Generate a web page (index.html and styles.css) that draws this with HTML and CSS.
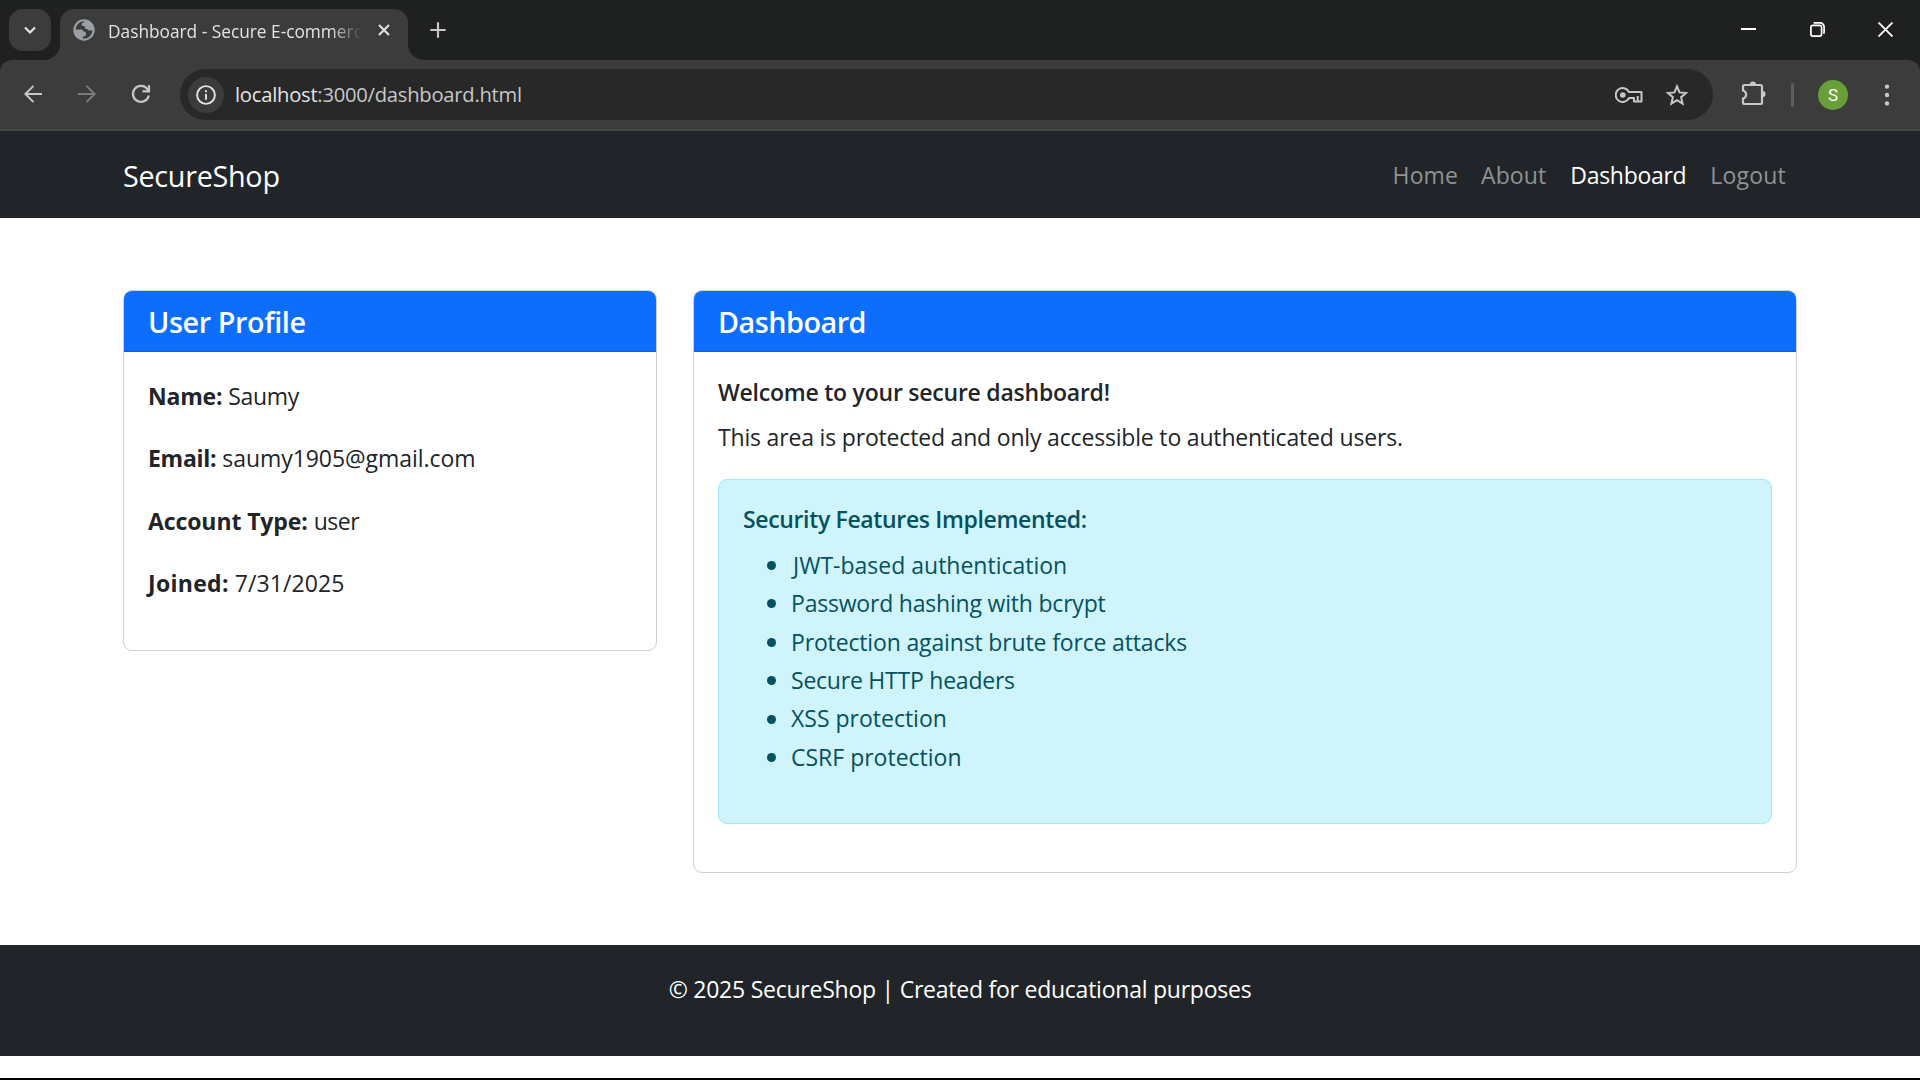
FILE: index.html
```
<!DOCTYPE html>
<html lang="en">
<head>
<meta charset="utf-8">
<title>Dashboard - Secure E-commerce</title>
<link rel="stylesheet" href="styles.css">
</head>
<body>
<div class="browser">
<div class="tabstrip">
  <div class="tab-search"><svg width="14" height="14" viewBox="0 0 14 14" fill="none" stroke="#e3e3e3" stroke-width="2.2"><path d="M2 4.5 7 9.5 12 4.5"/></svg></div>
  <div class="tab">
    <svg class="tab-foot left" viewBox="0 0 16 16"><path d="M16 0V16H0A16 16 0 0 0 16 0Z" fill="#3c3c3c"/></svg>
    <svg class="favicon" width="24" height="24" viewBox="0 0 24 24"><circle cx="12" cy="12" r="10.7" fill="#9aa0a6"/><path d="M3.400 11.500A8.700 8.700 0 0 1 13 3.400C11 4.300 9.600 5 9.600 6.600 9.600 8 10.800 8.200 12.800 8.200 12.800 10.500 13.600 11.200 15.800 11.200 16.200 12.600 17.500 12.600 20.600 12.600A8.700 8.700 0 0 1 10.800 20.500V18.600C13.400 18.500 14 17.400 14 15.800 14 13.900 12.800 13.200 11 13.200 10.800 11.800 10 11.500 8.600 11.500Z" fill="#3c3c3c"/></svg>
    <span class="tab-title">Dashboard - Secure E-commerc</span>
    <svg class="tab-close" width="12" height="12" viewBox="0 0 12 12" stroke="#e3e3e3" stroke-width="2.1"><path d="M1 1 11 11M11 1 1 11"/></svg>
    <svg class="tab-foot right" viewBox="0 0 16 16"><path d="M0 0V16H16A16 16 0 0 1 0 0Z" fill="#3c3c3c"/></svg>
  </div>
  <svg class="new-tab" width="16" height="16" viewBox="0 0 16 16" stroke="#c7c7c7" stroke-width="2.2"><path d="M8 .3V15.7M.3 8H15.7"/></svg>
  <div class="window-controls">
    <svg width="15" height="15" viewBox="0 0 15 15"><path d="M0 6H15V8H0Z" fill="#fff"/></svg>
    <svg width="15" height="15" viewBox="0 0 15 15" fill="none" stroke="#fff" stroke-width="1.7"><rect x=".9" y="3.4" width="10.7" height="10.7" rx="2.2"/><path d="M3.6 1.2C4 .95 4.4.9 5 .9H10.2A3.9 3.9 0 0 1 14.1 4.8V10C14.1 10.8 13.9 11.3 13.5 11.7"/></svg>
    <svg width="15" height="15" viewBox="0 0 15 15" stroke="#fff" stroke-width="1.8"><path d="M.5.5 14.5 14.5M14.5.5.5 14.5"/></svg>
  </div>
</div>
<div class="toolbar">
  <div class="history">
    <svg width="24" height="24" viewBox="0 0 24 24" fill="none" stroke="#c7c7c7" stroke-width="2"><path d="M21 12H5M12.5 3.9 4.4 12l8.1 8.1"/></svg>
    <svg width="24" height="24" viewBox="0 0 24 24" fill="none" stroke="#7c7c7c" stroke-width="2"><path d="M3 12H19M11.5 3.9 19.6 12l-8.1 8.1"/></svg>
    <svg width="24" height="24" viewBox="0 0 24 24" fill="none" stroke="#c7c7c7" stroke-width="2.2"><path d="M19.8 13.5A8 8 0 1 1 18.5 7.3L20 9M20 3.2V9.3H13.5"/></svg>
  </div>
  <div class="omnibox">
    <div class="site-info"><svg width="22" height="22" viewBox="0 0 22 22" fill="none" stroke="#e3e3e3" stroke-width="1.9"><circle cx="11" cy="11" r="8.9"/><path d="M11 10V15.8M11 6.300V8.300"/></svg></div>
    <span class="url"><span class="host">localhost</span>:3000/dashboard.html</span>
    <svg class="key" width="28" height="18" viewBox="0 0 28 18" fill="none" stroke="#c7c7c7" stroke-width="2" stroke-linejoin="round"><path d="M14 6A7 7 0 1 0 14 12H19V15.5H26.5V6Z"/><circle cx="7.8" cy="9" r="2.8" fill="#c7c7c7" stroke="none"/><path d="M22.7 10V15.5"/></svg>
    <svg class="star" width="24" height="24" viewBox="0 0 24 24" fill="none" stroke="#c7c7c7" stroke-width="2"><path d="M12 3.400 14.500 9.400 21 10 16.100 14.200 17.600 20.600 12 17.200 6.400 20.600 7.900 14.200 3 10 9.500 9.400Z"/></svg>
  </div>
  <svg class="extensions" width="27" height="27" viewBox="0 0 27 27"><path d="M4.500 5H20.500Q22 5 22 6.500V22.500Q22 24 20.500 24H4.500Q3 24 3 22.500V18.500C7.200 17.500 7.200 11.500 3 10.500V6.500Q3 5 4.500 5Z" fill="none" stroke="#c7c7c7" stroke-width="2.2"/><path d="M9.800 4.500a3.100 3.100 0 0 1 6.200 0ZM22.500 10.900a3.100 3.100 0 0 1 0 6.200Z" fill="#c7c7c7"/></svg>
  <div class="divider"></div>
  <div class="avatar">S</div>
  <svg class="menu" width="6" height="24" viewBox="0 0 6 24" fill="#c7c7c7"><circle cx="3" cy="3.6" r="2.2"/><circle cx="3" cy="12" r="2.2"/><circle cx="3" cy="20.4" r="2.2"/></svg>
</div>
</div>
<nav class="navbar">
  <a class="brand">SecureShop</a>
  <div class="nav-links">
    <a class="home">Home</a><a class="about">About</a><a class="active">Dashboard</a><a class="logout">Logout</a>
  </div>
</nav>
<main class="content">
  <section class="card profile">
    <h4 class="card-header">User Profile</h4>
    <div class="card-body">
      <p><strong class="k-name">Name:</strong> <span class="v-name">Saumy</span></p>
      <p><strong class="k-email">Email:</strong> <span class="v-email">saumy1905@gmail.com</span></p>
      <p><strong class="k-type">Account Type:</strong> <span class="v-type">user</span></p>
      <p><strong class="k-joined">Joined:</strong> <span class="v-date">7/31/2025</span></p>
    </div>
  </section>
  <section class="card dashboard">
    <h4 class="card-header">Dashboard</h4>
    <div class="card-body">
      <h5 class="welcome">Welcome to your secure dashboard!</h5>
      <p class="intro">This area is protected and only accessible to authenticated users.</p>
      <div class="alert">
        <h5 class="alert-title">Security Features Implemented:</h5>
        <ul class="features">
          <li class="f-jwt">JWT-based authentication</li>
          <li class="f-hash">Password hashing with bcrypt</li>
          <li class="f-brute">Protection against brute force attacks</li>
          <li class="f-http">Secure HTTP headers</li>
          <li>XSS protection</li>
          <li class="f-csrf">CSRF protection</li>
        </ul>
      </div>
    </div>
  </section>
</main>
<footer class="footer">© 2025 SecureShop | Created for educational purposes</footer>
</body>
</html>
```
FILE: styles.css
```
* { box-sizing: border-box; }
body {
  margin: 0;
  height: 1080px;
  overflow: hidden;
  background: #fff;
  color: #212529;
  border-bottom: 2px solid #000;
  font: 23px/38.4px "Open Sans", "Noto Sans", sans-serif;
}
svg { display: block; flex: none; }
h4, h5, p, ul { margin: 0; padding: 0; }

/* Tab strip */
.browser { background: #1f2120; }
.tabstrip {
  display: flex;
  height: 60px;
  padding: 9px 27px 0 9px;
}
.tab-search {
  display: flex;
  align-items: center;
  justify-content: center;
  width: 42px;
  height: 42px;
  border-radius: 14px;
  background: #3c3c3c;
}
.tab {
  position: relative;
  display: flex;
  align-items: center;
  width: 348px;
  height: 51px;
  margin-left: 9px;
  padding: 0 18px 9px 12px;
  border-radius: 14px 14px 0 0;
  background: #3c3c3c;
}
.tab-foot { position: absolute; bottom: 0; width: 16px; height: 16px; }
.tab-foot.left { left: -16px; }
.tab-foot.right { right: -16px; }
.tab-title {
  margin: 4px 0 0 12px;
  white-space: nowrap;
  color: #e3e3e3;
  font-size: 17.3px;
  line-height: 26px;
  letter-spacing: 0;
  -webkit-mask-image: linear-gradient(90deg, #000 222px, transparent 254px);
  mask-image: linear-gradient(90deg, #000 222px, transparent 254px);
}
.tab-close { margin-left: auto; }
.new-tab { margin: 13px 0 0 22px; }
.window-controls { display: flex; gap: 53.5px; margin: 13px 0 0 auto; }

/* Toolbar */
.toolbar {
  display: flex;
  align-items: center;
  height: 71px;
  padding: 0 30px 2px 21px;
  border-bottom: 2px solid #474747;
  border-radius: 12px 12px 0 0;
  background: #3c3c3c;
}
.history { display: flex; gap: 30px; padding-top: 1px; }
.omnibox {
  display: flex;
  align-items: center;
  width: 1533px;
  height: 51px;
  margin: 2px 0 0 27px;
  padding: 0 24px 0 8px;
  border-radius: 26px;
  background: #282828;
}
.site-info {
  display: flex;
  align-items: center;
  justify-content: center;
  width: 36px;
  height: 36px;
  border-radius: 50%;
  background: #3c3c3c;
}
.url {
  margin-left: 11px;
  color: #c7c7c7;
  font-size: 20.2px;
  letter-spacing: -0.246px;
}
.host { color: #e3e3e3; }
.key { margin-left: auto; }
.star { margin-left: 22px; }
.extensions { margin-left: 27px; }
.divider { width: 3px; height: 24px; margin: 2px 0 0 24px; border-radius: 2px; background: #5e5e5e; }
.avatar {
  width: 30px;
  height: 30px;
  margin: 2px 0 0 24px;
  border-radius: 50%;
  background: #689f38;
  color: #fff;
  font: 17px/30px Roboto, sans-serif;
  text-align: center;
}
.menu { margin: 2px 0 0 36px; }

/* Site navigation */
.navbar {
  display: flex;
  align-items: center;
  justify-content: space-between;
  height: 87px;
  padding: 2px 122px 0 123px;
  background: #212529;
}
.brand { padding-top: 2px; color: #fff; font-size: 28.75px; letter-spacing: -0.28px; }
.nav-links { display: flex; }
.nav-links a { padding: 0 12px; color: #909294; }
.nav-links .active { color: #fff; letter-spacing: -0.3px; }
.nav-links .home { padding-right: 11px; letter-spacing: 0.1px; }
.about { letter-spacing: 0.111px; }
.logout { letter-spacing: 0.2px; }

/* Cards */
.content {
  display: grid;
  grid-template-columns: 534px 1104px;
  gap: 36px;
  align-items: start;
  height: 727px;
  padding: 72px 123px 0;
}
.card { border: 1px solid #d0d0d1; border-radius: 9px; }
.profile { height: 361px; }
.dashboard { height: 583px; }
.card-header {
  height: 61px;
  padding: 0 24px;
  border-bottom: 1px solid #0b5ed7;
  border-radius: 8px 8px 0 0;
  background: #0d6efd;
  color: #fff;
  font-size: 28.75px;
  font-weight: 600;
  line-height: 61px;
  letter-spacing: -0.4px;
}
.dashboard .card-header { letter-spacing: -0.5px; }
.card-body { padding: 25px 24px 0; }
.profile p { margin-bottom: 24px; }
strong { font-weight: 700; }
.k-name { letter-spacing: -0.191px; }
.v-name { letter-spacing: -0.348px; }
.k-email { letter-spacing: -0.279px; }
.v-email { letter-spacing: -0.053px; }
.k-type { letter-spacing: -0.1px; }
.v-type { letter-spacing: -0.5px; }
.k-joined { letter-spacing: 0.3px; }
.v-date { letter-spacing: 0.091px; }
.welcome, .alert-title {
  margin-bottom: 12px;
  font-size: 23px;
  font-weight: 600;
  line-height: 28.8px;
  letter-spacing: -0.23px;
}
.welcome { padding-top: 0.5px; }
.intro { margin-bottom: 22.3px; letter-spacing: -0.18px; }
.alert {
  height: 345px;
  padding: 25px 24px 0;
  border: 1px solid #9eeaf9;
  border-radius: 9px;
  background: #cff4fc;
  color: #055160;
}
.alert-title { letter-spacing: -0.35px; }
.features { padding-left: 24px; list-style: none; }
.features li { display: flex; align-items: center; gap: 15px; }
.features li::before {
  content: "";
  width: 9px;
  height: 9px;
  margin-top: 1px;
  border-radius: 50%;
  background: #055160;
}
.features .f-jwt { gap: 17px; }
.f-hash { letter-spacing: -0.2px; }
.f-brute { letter-spacing: -0.15px; }
.f-http { letter-spacing: -0.23px; }
.f-csrf { letter-spacing: 0; }

.footer {
  height: 111px;
  padding-top: 25px;
  background: #212529;
  color: #fff;
  text-align: center;
  letter-spacing: -0.241px;
}
```
